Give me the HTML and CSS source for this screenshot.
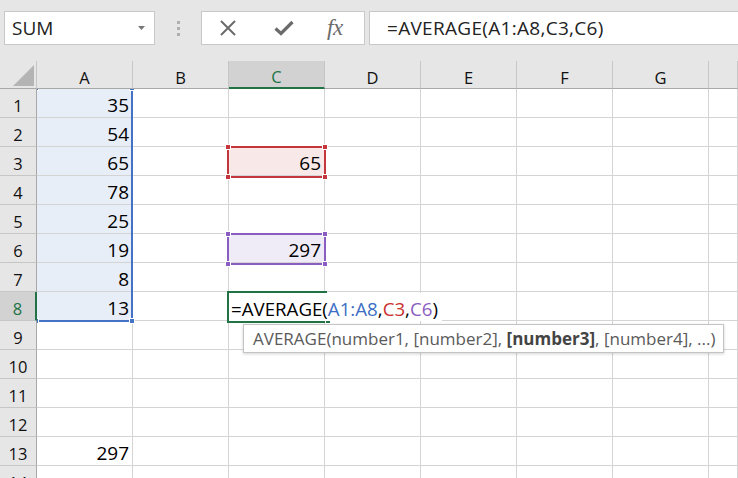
FILE: index.html
```html
<!DOCTYPE html>
<html>
<head>
<meta charset="utf-8">
<link rel="stylesheet" href="styles.css">
</head>
<body>
<div class="toolbar">
  <div class="namebox"><span>SUM</span><svg class="arrow" width="7" height="4" viewBox="0 0 7 4"><path d="M0 0H7L3.5 4Z" fill="#777"/></svg></div>
  <div class="grip"><i></i><i></i><i></i></div>
  <div class="fxbox">
    <svg class="ico" width="18" height="18" viewBox="0 0 18 18"><path d="M2 2L16 16M16 2L2 16" stroke="#6b6b6b" stroke-width="2" fill="none"/></svg>
    <svg class="ico" width="20" height="16" viewBox="0 0 20 16"><path d="M1.5 8.5L7 13.5L18.5 2" stroke="#6b6b6b" stroke-width="3.2" fill="none"/></svg>
    <span class="fx">fx</span>
  </div>
  <div class="formula"><span>=AVERAGE(A1:A8,C3,C6)</span></div>
</div>
<div class="sheet">
  <div class="grid">
    <div class="corner"><svg width="21" height="21" viewBox="0 0 21 21"><path d="M21 0V21H0Z" fill="#b4b4b4"/></svg></div>
    <div class="ch">A</div><div class="ch">B</div><div class="ch act">C</div><div class="ch">D</div><div class="ch">E</div><div class="ch">F</div><div class="ch">G</div><div class="ch"></div>

    <div class="rh">1</div><div class="c sel">35</div><div class="c"></div><div class="c"></div><div class="c"></div><div class="c"></div><div class="c"></div><div class="c"></div><div class="c"></div>
    <div class="rh">2</div><div class="c sel">54</div><div class="c"></div><div class="c"></div><div class="c"></div><div class="c"></div><div class="c"></div><div class="c"></div><div class="c"></div>
    <div class="rh">3</div><div class="c sel">65</div><div class="c"></div><div class="c red">65</div><div class="c"></div><div class="c"></div><div class="c"></div><div class="c"></div><div class="c"></div>
    <div class="rh">4</div><div class="c sel">78</div><div class="c"></div><div class="c"></div><div class="c"></div><div class="c"></div><div class="c"></div><div class="c"></div><div class="c"></div>
    <div class="rh">5</div><div class="c sel">25</div><div class="c"></div><div class="c"></div><div class="c"></div><div class="c"></div><div class="c"></div><div class="c"></div><div class="c"></div>
    <div class="rh">6</div><div class="c sel">19</div><div class="c"></div><div class="c purple">297</div><div class="c"></div><div class="c"></div><div class="c"></div><div class="c"></div><div class="c"></div>
    <div class="rh">7</div><div class="c sel">8</div><div class="c"></div><div class="c"></div><div class="c"></div><div class="c"></div><div class="c"></div><div class="c"></div><div class="c"></div>
    <div class="rh act">8</div><div class="c sel">13</div><div class="c"></div><div class="c"></div><div class="c"></div><div class="c"></div><div class="c"></div><div class="c"></div><div class="c"></div>
    <div class="rh">9</div><div class="c"></div><div class="c"></div><div class="c"></div><div class="c"></div><div class="c"></div><div class="c"></div><div class="c"></div><div class="c"></div>
    <div class="rh">10</div><div class="c"></div><div class="c"></div><div class="c"></div><div class="c"></div><div class="c"></div><div class="c"></div><div class="c"></div><div class="c"></div>
    <div class="rh">11</div><div class="c"></div><div class="c"></div><div class="c"></div><div class="c"></div><div class="c"></div><div class="c"></div><div class="c"></div><div class="c"></div>
    <div class="rh">12</div><div class="c"></div><div class="c"></div><div class="c"></div><div class="c"></div><div class="c"></div><div class="c"></div><div class="c"></div><div class="c"></div>
    <div class="rh">13</div><div class="c">297</div><div class="c"></div><div class="c"></div><div class="c"></div><div class="c"></div><div class="c"></div><div class="c"></div><div class="c"></div>
    <div class="rh">14</div><div class="c"></div><div class="c"></div><div class="c"></div><div class="c"></div><div class="c"></div><div class="c"></div><div class="c"></div><div class="c"></div>
  </div>

  <div class="range r-a"><i class="h tl"></i><i class="h tr"></i><i class="h bl"></i><i class="h br"></i></div>
  <div class="range r-c3"><i class="h tl"></i><i class="h tr"></i><i class="h bl"></i><i class="h br"></i></div>
  <div class="range r-c6"><i class="h tl"></i><i class="h tr"></i><i class="h bl"></i><i class="h br"></i></div>
  <div class="active"><i class="h br"></i></div>
  <div class="editor"><span>=AVERAGE(<span class="t-blue">A1:A8</span>,<span class="t-red">C3</span>,<span class="t-purple">C6</span>)</span></div>
  <div class="tip"><span>AVERAGE(number1, [number2], <b>[number3]</b>, [number4], ...)</span></div>
</div>
</body>
</html>
```

FILE: styles.css
```css
* { box-sizing: border-box; margin: 0; padding: 0; }
html, body { width: 738px; height: 478px; overflow: hidden; }
body {
  background: #e6e6e6;
  font-family: "Open Sans", "Noto Sans", sans-serif;
  color: #000;
}

/* ---------- toolbar ---------- */
.toolbar {
  height: 61px;
  display: flex;
  align-items: flex-start;
  padding: 11px 0 0 4px;
}
.namebox {
  width: 151px;
  height: 34px;
  background: #fff;
  border: 1px solid #c8c8c8;
  display: flex;
  align-items: center;
  justify-content: space-between;
  padding: 0 9px 0 7px;
  font-size: 19px;
  color: #222;
}
.arrow { display: block; }
.grip {
  width: 46px;
  height: 34px;
  display: flex;
  flex-direction: column;
  align-items: center;
  justify-content: center;
  gap: 3px;
}
.grip i { display: block; width: 3px; height: 3px; background: #afafaf; }
.fxbox {
  width: 164px;
  height: 34px;
  background: #fff;
  border: 1px solid #c8c8c8;
  display: flex;
  align-items: center;
  padding-left: 17px;
}
.fxbox .ico { display: block; }
.fxbox .ico:nth-child(1) { margin-right: 37px; }
.fxbox .ico:nth-child(2) { margin-right: 33px; }
.fx {
  font-family: "Liberation Serif", "DejaVu Serif", serif;
  font-style: italic;
  font-size: 23px;
  color: #6b6b6b;
  letter-spacing: -0.5px;
  line-height: 1;
  padding-bottom: 2px;
}
.formula {
  flex: 1;
  height: 34px;
  margin-left: 4px;
  margin-right: -2px;
  background: #fff;
  border: 1px solid #c8c8c8;
  display: flex;
  align-items: center;
  padding-left: 17px;
  font-size: 19px;
  letter-spacing: 0.3px;
  color: #222;
}

/* ---------- sheet ---------- */
.sheet { position: relative; }
.grid {
  display: grid;
  grid-template-columns: 37px repeat(7, 96px) 1fr;
  grid-template-rows: 28px;
  grid-auto-rows: 29px;
}
.corner, .ch, .rh {
  position: relative;
  z-index: 2;
  background: #e6e6e6;
}
.corner {
  border-right: 1px solid #c6c6c6;
  border-bottom: 1px solid #a8a8a8;
  display: flex;
  justify-content: flex-end;
  align-items: flex-end;
  padding: 0 2px 2px 0;
}
.corner svg { display: block; }
.ch {
  border-right: 1px solid #c6c6c6;
  border-bottom: 1px solid #a8a8a8;
  display: flex;
  align-items: center;
  justify-content: center;
  padding-top: 5px;
  font-size: 16.5px;
  color: #111;
}
.ch.act {
  background: #d2d2d2;
  color: #217346;
  border-bottom: 2px solid #217346;
}
.rh {
  border-right: 1px solid #a8a8a8;
  border-bottom: 1px solid #c6c6c6;
  display: flex;
  align-items: center;
  justify-content: center;
  padding-top: 4px;
  font-size: 16.5px;
  color: #111;
}
.rh.act {
  background: #d2d2d2;
  color: #217346;
  border-right: 2px solid #217346;
}
.c {
  background: #fff;
  border-right: 1px solid #d4d4d4;
  border-bottom: 1px solid #d4d4d4;
  display: flex;
  align-items: center;
  justify-content: flex-end;
  padding: 4px 3px 0 0;
  font-size: 19px;
}
.c.sel { background: #e8eef8; }
.c.red { background: #f9e8e8; }
.c.purple { background: #efecf7; }

/* ---------- range highlights (overlay) ---------- */
.range, .active {
  position: absolute;
  z-index: 1;
  border: 2px solid;
}
.r-a { left: 35px; top: 26px; width: 98px; height: 235px; border-color: #4472c4; color: #4472c4; }
.r-c3 { left: 227px; top: 85px; width: 99px; height: 32px; border-color: #c4363c; color: #c4363c; }
.r-c6 { left: 227px; top: 172px; width: 99px; height: 32px; border-color: #8a5ec0; color: #8a5ec0; }
.active {
  left: 227px; top: 230px; width: 100px; height: 32px;
  border-color: #217346; color: #217346;
  border-right: none;
}
.h {
  position: absolute;
  width: 6px;
  height: 6px;
  background: currentColor;
  border: 1px solid #fff;
}
.h.tl { left: -4px; top: -4px; }
.h.tr { right: -4px; top: -4px; }
.h.bl { left: -4px; bottom: -4px; }
.h.br { right: -4px; bottom: -4px; }
.active .h.br { right: -4px; bottom: -3px; }

.editor {
  position: absolute;
  z-index: 3;
  left: 229px;
  top: 232px;
  height: 28px;
  display: flex;
  align-items: center;
  padding: 3px 4px 0 2px;
  background: #fff;
  font-size: 18.7px;
  color: #000;
  white-space: nowrap;
}
.t-blue { color: #3c6fc5; }
.t-red { color: #c9312f; }
.t-purple { color: #8a5ec0; }

.tip {
  position: absolute;
  z-index: 4;
  left: 243px;
  top: 263px;
  width: 481px;
  height: 29px;
  background: #fff;
  border: 1px solid #c4c4c4;
  box-shadow: 0 1px 3px rgba(0,0,0,0.18);
  display: flex;
  align-items: center;
  padding-left: 9px;
  font-size: 17px;
  color: #5a5a5a;
  white-space: nowrap;
}
.tip b { color: #444; font-weight: 700; }
```
